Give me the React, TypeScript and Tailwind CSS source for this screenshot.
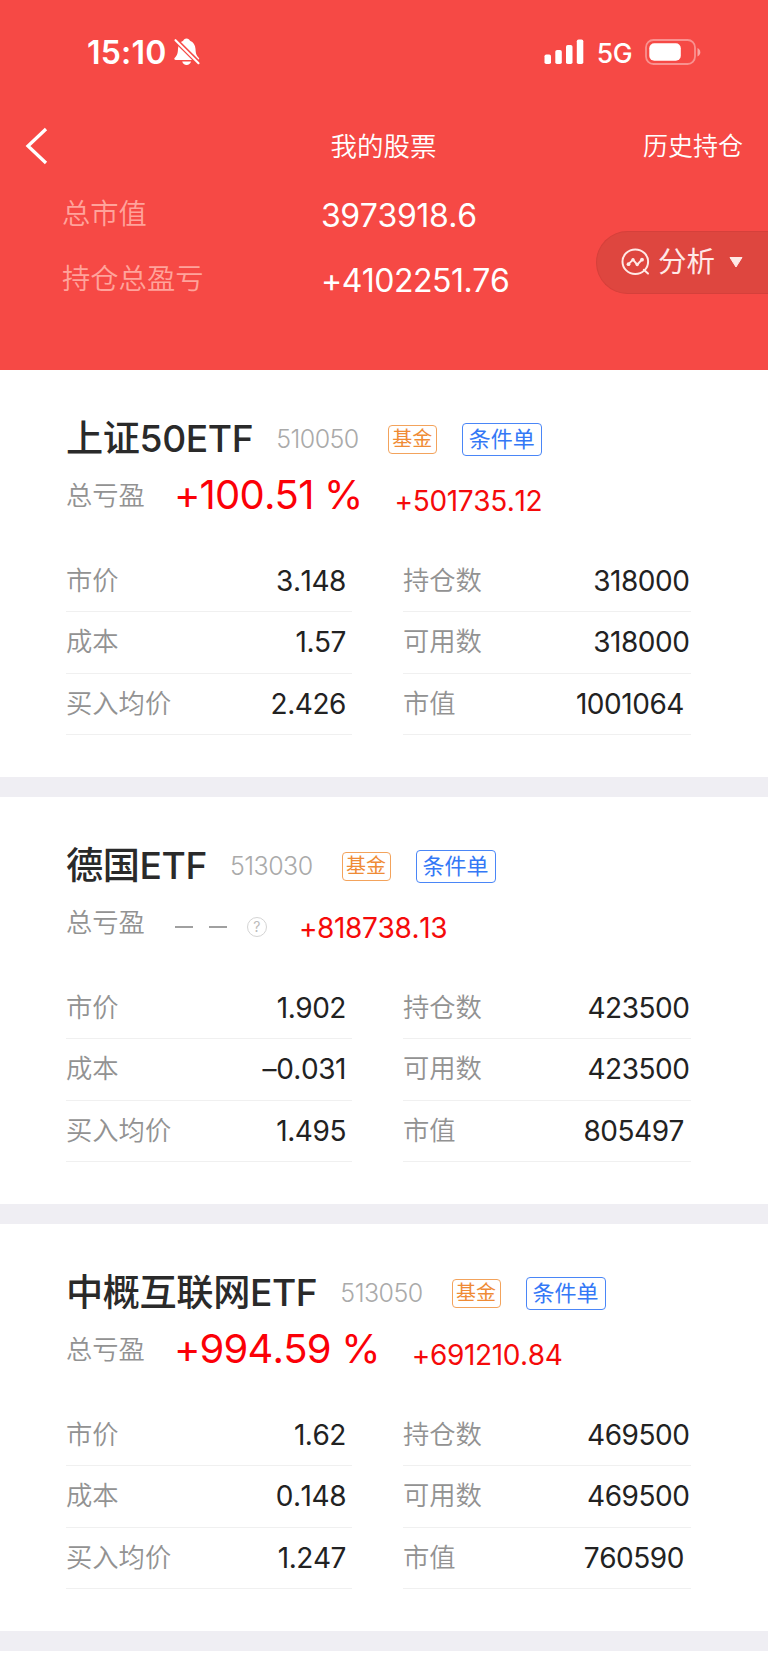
type Holding = {
  name: string;
  code: string;
  percent: string | null;
  profit: string;
  left: [string, string][];
  right: [string, string][];
};

const holdings: Holding[] = [
  {
    name: '上证50ETF',
    code: '510050',
    percent: '+100.51 %',
    profit: '+501735.12',
    left: [['市价', '3.148'], ['成本', '1.57'], ['买入均价', '2.426']],
    right: [['持仓数', '318000'], ['可用数', '318000'], ['市值', '1001064']],
  },
  {
    name: '德国ETF',
    code: '513030',
    percent: null,
    profit: '+818738.13',
    left: [['市价', '1.902'], ['成本', '–0.031'], ['买入均价', '1.495']],
    right: [['持仓数', '423500'], ['可用数', '423500'], ['市值', '805497']],
  },
  {
    name: '中概互联网ETF',
    code: '513050',
    percent: '+994.59 %',
    profit: '+691210.84',
    left: [['市价', '1.62'], ['成本', '0.148'], ['买入均价', '1.247']],
    right: [['持仓数', '469500'], ['可用数', '469500'], ['市值', '760590']],
  },
];

const BellOff = () => (
  <svg width="26" height="28" viewBox="0 0 26 28" className="ml-[7px]">
    <path d="M12.500 .5c-1.800 0-3 1-3.300 2.300C5.800 4.200 4.200 7.300 4 11c-.2 4.600-1 6.600-3.200 8.700-.9.900-.5 2.300.8 2.300h22.300c1.300 0 1.700-1.400.8-2.300-2.200-2.100-3-4.100-3.200-8.700-.2-3.700-2-6.800-5.500-8.200C15.600 1.500 14.300.5 12.500.5z" fill="#fff" />
    <path d="M8.200 23.600h8.800c-.6 2-2.200 3.400-4.400 3.400S8.800 25.600 8.200 23.600z" fill="#fff" />
    <path d="M0 .500 26 26.500" stroke="#f64945" strokeWidth="4.800" />
    <path d="M1.500 2.200 24.500 25.200" stroke="#fff" strokeWidth="2.100" strokeLinecap="round" />
  </svg>
);

const StatusBar = () => (
  <div className="flex h-[104px] items-center pl-[87px] pr-[67px]">
    <span className="mt-0.5 text-[32px] font-semibold leading-none tracking-[0.2px] [font-kerning:none]">15:10</span>
    <BellOff />
    <svg width="40" height="26" viewBox="0 0 40 26" className="ml-auto">
      <rect x="0.500" y="15.500" width="6.500" height="9.500" rx="1.800" fill="#fff" />
      <rect x="11.300" y="11" width="6.500" height="14" rx="1.800" fill="#fff" />
      <rect x="22" y="6" width="6.500" height="19" rx="1.800" fill="#fff" />
      <rect x="32.800" y="0.500" width="6.500" height="24.500" rx="1.800" fill="#fff" />
    </svg>
    <span className="ml-[13px] mt-0.5 text-[26.500px] font-[450] leading-none tracking-[-0.5px]">5G</span>
    <svg width="56" height="26" viewBox="0 0 56 26" className="ml-[13px]">
      <rect x="1" y="1" width="49" height="24" rx="7.500" fill="none" stroke="#fff" strokeOpacity="0.400" strokeWidth="1.800" />
      <rect x="4.300" y="4.300" width="31.500" height="17.500" rx="5" fill="#fff" />
      <path d="M52.500 9v8.500c1.700-.7 2.800-2.300 2.800-4.250S54.200 9.700 52.500 9z" fill="#fff" fillOpacity="0.500" />
    </svg>
  </div>
);

const AnalysisIcon = () => (
  <svg width="29" height="29" viewBox="0 0 29 29" fill="none" stroke="#ffe9e6" strokeWidth="2">
    <ellipse cx="14.300" cy="13.700" rx="12.800" ry="12.300" />
    <path d="M22.800 21.800 27 25.600" strokeLinecap="round" />
    <path d="m7.500 16.200 4.500-4.500 4.200 5L21 11.500" strokeWidth="1.900" />
    <circle cx="7.500" cy="16.200" r="1.900" fill="#ffe9e6" stroke="none" />
    <circle cx="12" cy="11.800" r="1.700" fill="#ffe9e6" stroke="none" />
    <circle cx="16.200" cy="16.500" r="1.700" fill="#ffe9e6" stroke="none" />
    <circle cx="21" cy="11.700" r="1.900" fill="#ffe9e6" stroke="none" />
  </svg>
);

const Header = () => (
  <header className="relative h-[370px] bg-[#f64945] text-white">
    <StatusBar />
    <div className="grid h-[84px] grid-cols-3 items-center pl-6 pr-[25px]">
      <svg width="24" height="38" viewBox="0 0 24 38" fill="none">
        <path d="M22 2 4 19 22 36" stroke="#fff" strokeWidth="3.300" />
      </svg>
      <span className="mt-0.5 text-center text-[26.500px] font-[350]">我的股票</span>
      <span className="mt-0.5 text-right text-[25px] font-[350]">历史持仓</span>
    </div>
    <dl className="grid grid-cols-[259px_1fr] pl-[62px] pt-px">
      <dt className="h-[65px] text-[28.300px] font-[350] leading-[51px] text-[#ffa39b]">总市值</dt>
      <dd className="h-[65px] text-[32px] font-[380] leading-[54px] tracking-[-0.4px] [font-kerning:none]">3973918.6</dd>
      <dt className="h-[65px] text-[28.300px] font-[350] leading-[51px] text-[#ffa39b]">持仓总盈亏</dt>
      <dd className="h-[65px] text-[32px] font-[380] leading-[54px] tracking-[-0.5px] [font-kerning:none]">+4102251.76</dd>
    </dl>
    <button className="absolute right-0 top-[231px] flex h-[63px] w-[172px] items-center rounded-l-full border border-r-0 border-[#d5403b] bg-[#de463f] pl-6 text-[#ffe9e6]">
      <AnalysisIcon />
      <span className="ml-2 text-[28.500px] leading-none">分析</span>
      <svg width="14" height="11" viewBox="0 0 14 11" className="ml-3.5">
        <path d="M1 .5h12L7 10z" fill="#ffe9e6" stroke="#ffe9e6" strokeLinejoin="round" />
      </svg>
    </button>
  </header>
);

const Rows = ({ rows, right }: { rows: [string, string][]; right?: boolean }) => (
  <div className={right ? 'w-72' : 'w-[286px]'}>
    {rows.map(([label, value]) => (
      <div
        key={label}
        className={`flex h-[61.330px] items-center justify-between border-b border-[#f0f0f0] ${right ? (label === '市值' ? 'pr-[7px]' : 'pr-[1.500px]') : 'pr-1.5'}`}
      >
        <span className="text-[26.300px] font-[350] leading-none text-[#929292]">{label}</span>
        <span className="text-[28px] font-[380] leading-none tracking-[-0.45px] text-[#222] [font-kerning:none]">{value}</span>
      </div>
    ))}
  </div>
);

const HoldingCard = ({ item }: { item: Holding }) => (
  <section className="h-[427px] border-b-[20px] border-[#efeef3] bg-white pl-[66px] pt-[49px]">
    <div className="flex h-10 items-center">
      <h2 className="text-[37.200px] font-medium leading-none tracking-[-0.4px] text-[#2a2a2a]">{item.name}</h2>
      <span className="ml-[23px] text-[25px] font-light leading-none tracking-[-0.55px] text-[#aaa]">{item.code}</span>
      <span className="ml-[29px] flex h-[29px] w-[49px] items-center justify-center rounded border border-[#f3a35c] text-[20px] leading-none text-[#ef8b35]">
        基金
      </span>
      <span className="ml-[25px] flex h-[33px] w-20 items-center justify-center rounded border border-[#4a86f7] text-[22px] leading-none text-[#3478f6]">
        条件单
      </span>
    </div>
    <div className="mt-3 flex h-12 items-center leading-none">
      <span className="mt-[3px] text-[26.300px] font-[350] text-[#929292]">总亏盈</span>
      {item.percent ? (
        <span className="ml-[29px] text-[40px] font-[380] tracking-[-0.8px] text-[#fb0007] [font-kerning:none]">{item.percent}</span>
      ) : (
        <div className="ml-[30px] mt-2.5 flex items-center">
          <span className="h-0.5 w-[18px] bg-[#a0a0a0]" />
          <span className="ml-4 h-0.5 w-[18px] bg-[#a0a0a0]" />
          <span className="ml-5 flex h-5 w-5 items-center justify-center rounded-full border border-[#d4d4d4] text-[14px] text-[#bbb]">?</span>
        </div>
      )}
      <span className="ml-8 mt-[11px] text-[28px] font-[380] tracking-[-0.35px] text-[#f50a0a] [font-kerning:none]">{item.profit}</span>
    </div>
    <div className="mt-8 flex gap-[51px]">
      <Rows rows={item.left} />
      <Rows rows={item.right} right />
    </div>
  </section>
);

export default function App() {
  return (
    <main className="h-[1665px] w-[768px] overflow-hidden bg-white font-[Inter,'Noto_Sans_CJK_SC',sans-serif]">
      <Header />
      {holdings.map((item) => (
        <HoldingCard key={item.code} item={item} />
      ))}
    </main>
  );
}
